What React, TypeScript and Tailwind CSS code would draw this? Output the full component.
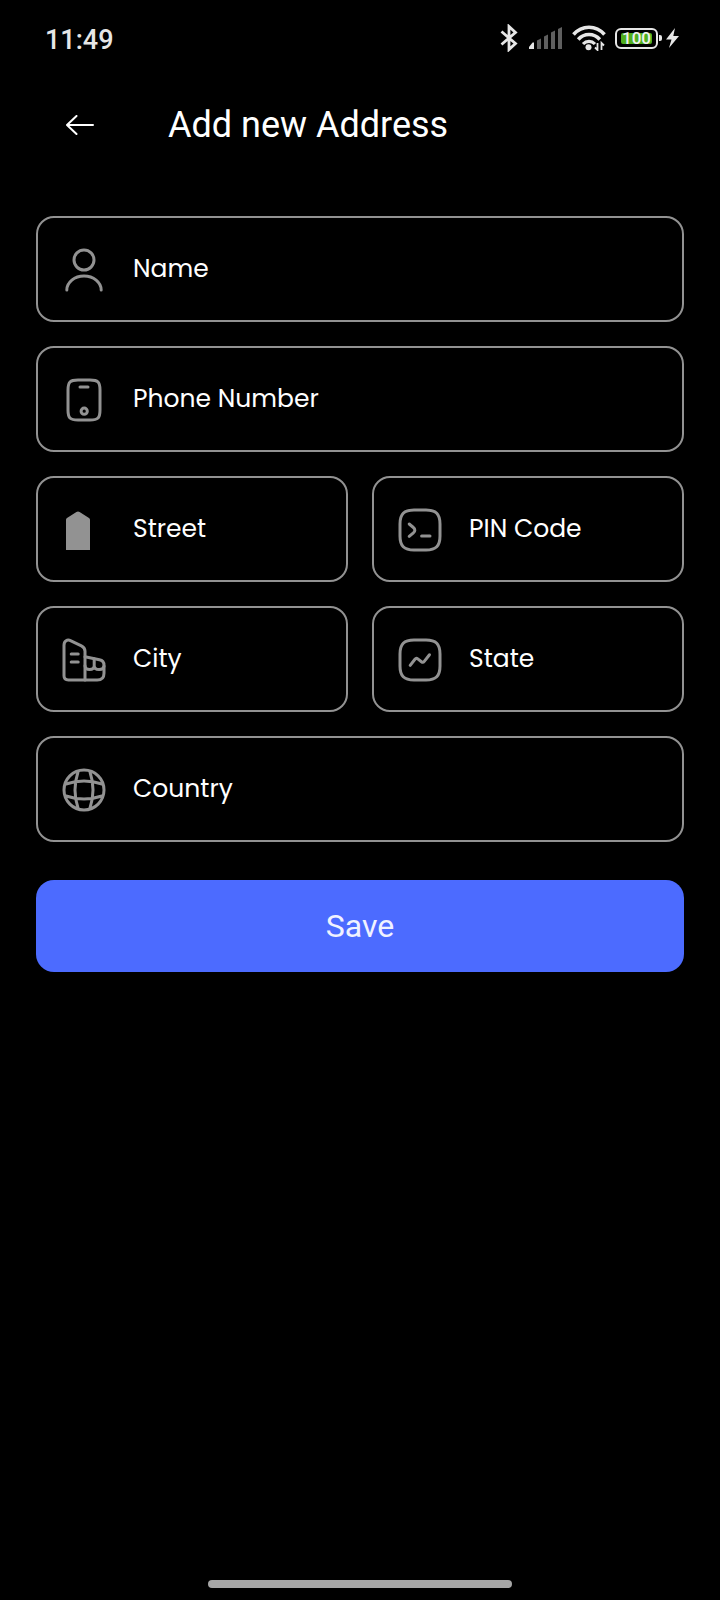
import type { InputHTMLAttributes, ReactNode } from "react";

const SQUARE = "M9 22h6c5 0 7-2 7-7V9c0-5-2-7-7-7H9C4 2 2 4 2 9v6c0 5 2 7 7 7z";

function Icon({ children }: { children: ReactNode }) {
  return (
    <svg
      viewBox="0 -1 24 25"
      className="h-[50px] w-12 shrink-0"
      fill="none"
      stroke="#929292"
      strokeWidth="1.5"
      strokeLinecap="round"
      strokeLinejoin="round"
      aria-hidden="true"
    >
      {children}
    </svg>
  );
}

const icons = {
  user: (
    <Icon>
      <circle cx="12" cy="7" r="5" />
      <path d="M20.59 22c0-3.87-3.85-7-8.59-7s-8.59 3.13-8.59 7" />
    </Icon>
  ),
  phone: (
    <Icon>
      <path d="M20 7v10c0 4-1 5-5 5H9c-4 0-5-1-5-5V7c0-4 1-5 5-5h6c4 0 5 1 5 5z" />
      <path d="M14 5.5h-4" />
      <circle cx="12.1" cy="17.6" r="1.55" />
    </Icon>
  ),
  street: (
    <Icon>
      <path
        d="M3 22V6.9c0-.4.2-.7.5-.9l4.7-3c.5-.35 1.1-.35 1.6 0l4.7 3c.3.2.5.5.5.9V22z"
        fill="#929292"
        stroke="none"
      />
    </Icon>
  ),
  code: (
    <Icon>
      <path d={SQUARE} />
      <path d="M6.6 9l2.1 1.75c.95.75.95 1.95 0 2.7L6.6 15.2M12.8 15h4.2" />
    </Icon>
  ),
  city: (
    <Icon>
      <path d="M12.5 22H4.2C2.8 22 2 21.2 2 19.9V4.6C2 2.4 3.6 1.5 5.5 2.4l5.2 2.5c1.2.6 1.8 1.4 1.8 2.7V22z" />
      <path d="M5.6 9h3.5M5.6 13h3.5" />
      <path d="M12.5 10.4l7.2 1.5c1.5.3 2.3 1.2 2.3 2.7v4c0 2.3-1.1 3.4-3.4 3.4h-6.1" />
      <path d="M17.1 11.4V15M12.5 14.9c.2 2.4 4.4 2.4 4.6 0 .2 2.4 4.5 2.6 4.9.2" />
    </Icon>
  ),
  state: (
    <Icon>
      <path d={SQUARE} />
      <path d="M7.1 14.7l2.38-3.09c.34-.44.97-.52 1.41-.18l1.83 1.44c.44.34 1.07.26 1.41-.17l2.6-3.3" />
    </Icon>
  ),
  globe: (
    <Icon>
      <circle cx="12" cy="12" r="10" />
      <path d="M9 3c-1.95 5.84-1.95 12.16 0 18M15 3c1.95 5.84 1.95 12.16 0 18M3 15c5.84 1.95 12.16 1.95 18 0M3 9c5.84-1.95 12.16-1.95 18 0" />
    </Icon>
  ),
};

type FieldProps = InputHTMLAttributes<HTMLInputElement> & {
  id: string;
  label: string;
  icon: ReactNode;
  wide?: boolean;
};

function Field({ id, label, icon, wide, ...rest }: FieldProps) {
  return (
    <label
      htmlFor={id}
      className={`flex h-[106px] min-w-0 items-center gap-[25px] rounded-[18px] border-2 border-[#929292] px-[22px] ${
        wide ? "col-span-2" : ""
      }`}
    >
      {icon}
      <input
        id={id}
        name={id}
        aria-label={label}
        placeholder={label}
        className="min-w-0 flex-1 bg-transparent font-['Poppins','Inter',sans-serif] text-[25px] leading-9 text-white outline-none placeholder:text-white placeholder:opacity-100"
        {...rest}
      />
    </label>
  );
}

function StatusBar() {
  return (
    <div className="flex h-20 items-center justify-between pr-[41px] pl-[45px] text-[#e6e6e6]">
      <span className="text-[27px] leading-8 font-medium">11:49</span>
      <div className="flex items-center pb-1">
        <svg viewBox="0 0 18 28" className="mr-[11px] h-7 w-[18px]" fill="none" stroke="currentColor" strokeWidth="2.8" aria-hidden="true">
          <path d="M1.5 7.5L15.5 19.5 9 25.5V2.5l6.500 6L1.500 20.500" />
        </svg>
        <svg viewBox="0 0 34 22" className="mr-[9px] h-[22px] w-[34px]" aria-hidden="true">
          <path d="M0 22v-2l3.600-4.500H5V22z" fill="currentColor" />
          <path d="M8 22v-8.500l4-2V22zM15 22V9.500l4-2V22zM22 22V5.500l4-2V22zM29 22V2l4-2v22z" fill="#5f5f5f" />
        </svg>
        <svg viewBox="0 0 34 26" className="mr-[9px] h-[26px] w-[34px]" fill="none" stroke="currentColor" aria-hidden="true">
          <path d="M1.500 9.500C10 -.2 24 -.2 32.500 9.500" strokeWidth="3.600" />
          <path d="M6.200 14.500c6-6.600 15.600-6.600 21.600 0" strokeWidth="3.600" />
          <path d="M11 19c3.500-3.600 8.500-3.600 12 0" strokeWidth="3.200" />
          <circle cx="16.500" cy="22.300" r="3" fill="currentColor" stroke="none" />
          <path d="M25.500 18v7l-2.500-2.500M29.500 25v-7l2.500 2.500" strokeWidth="1.800" />
        </svg>
        <div className="flex items-center">
          <div className="flex h-[21px] w-[43px] items-center justify-center rounded-[6px] border-2 border-current">
            <span className="flex h-[11px] w-[31px] items-center justify-center rounded-xs bg-[#4fae1e] text-[17px] leading-none font-medium text-[#f0f0f0]">
              100
            </span>
          </div>
          <span className="ml-px h-[6px] w-[3px] rounded-r-xs bg-current" />
        </div>
        <svg viewBox="0 0 13 20" className="ml-1 h-5 w-[13px]" fill="currentColor" aria-hidden="true">
          <path d="M9 0L0 11.500h5.500L3 20l10-12H7.300z" />
        </svg>
      </div>
    </div>
  );
}

export default function App() {
  return (
    <div className="flex min-h-screen flex-col bg-black font-['Roboto',sans-serif] text-white">
      <StatusBar />
      <header className="flex h-[90px] items-center gap-[60px] pl-[52px]">
        <button type="button" aria-label="Back" className="flex size-14 items-center justify-center">
          <svg viewBox="0 0 28 20" className="h-5 w-7" fill="none" stroke="currentColor" strokeWidth="2" strokeLinecap="round" strokeLinejoin="round" aria-hidden="true">
            <path d="M27 10H1M10.500 1L1 10l9.500 9" />
          </svg>
        </button>
        <h1 className="text-4xl">Add new Address</h1>
      </header>
      <form className="flex flex-col gap-[38px] px-9 pt-[46px]" onSubmit={(e) => e.preventDefault()}>
        <div className="grid grid-cols-2 gap-6">
          <Field wide id="name" label="Name" icon={icons.user} />
          <Field wide id="phone" type="tel" label="Phone Number" icon={icons.phone} />
          <Field id="street" label="Street" icon={icons.street} />
          <Field id="pin" label="PIN Code" icon={icons.code} />
          <Field id="city" label="City" icon={icons.city} />
          <Field id="state" label="State" icon={icons.state} />
          <Field wide id="country" label="Country" icon={icons.globe} />
        </div>
        <button type="submit" className="h-[92px] rounded-[18px] bg-[#4c6bff] text-[32px] text-[#f0f2ff]">
          Save
        </button>
      </form>
      <div className="mx-auto mt-auto mb-3 h-2 w-[304px] rounded-full bg-[#a6a6a6]" />
    </div>
  );
}
